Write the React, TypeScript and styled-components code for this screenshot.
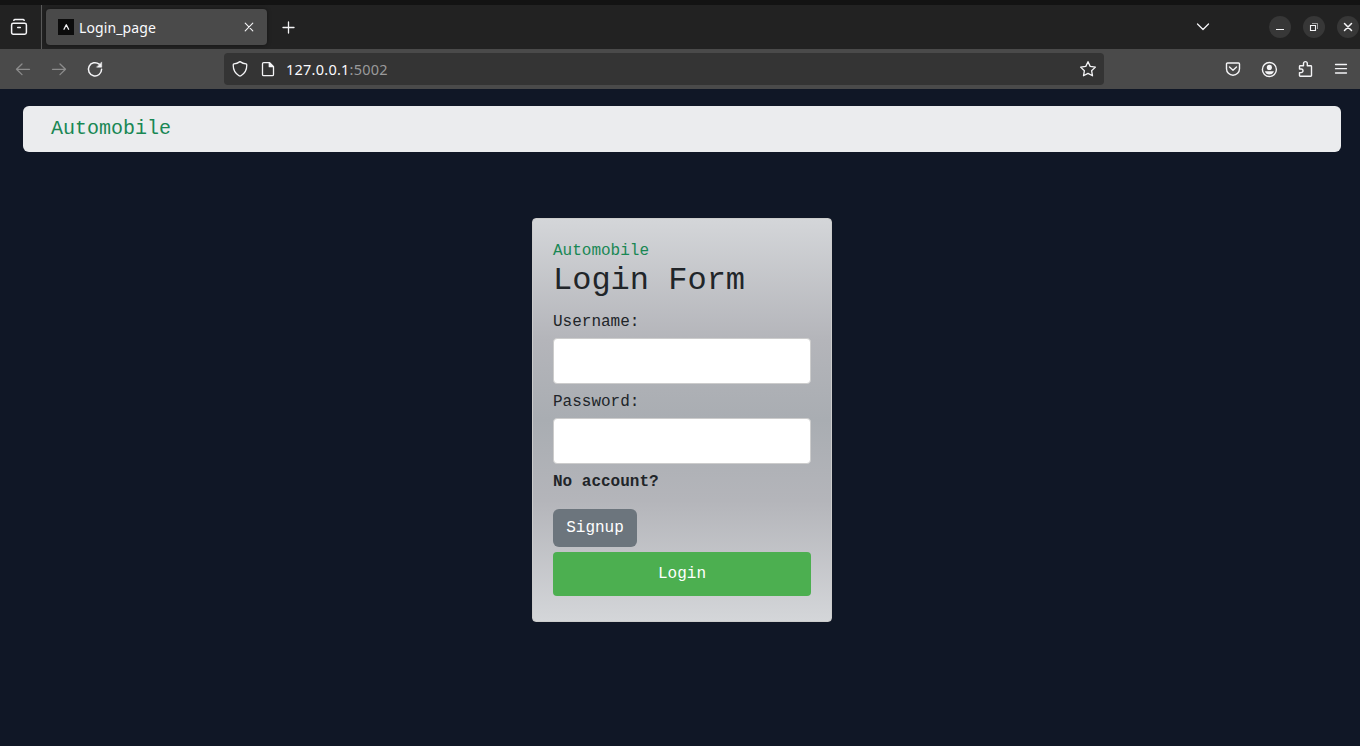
import React from "react";
import styled, { createGlobalStyle } from "styled-components";

const GlobalStyle = createGlobalStyle`
  *, *::before, *::after { box-sizing: border-box; }
  body { margin: 0; background: #101726; overflow: hidden; }
`;

const Window = styled.div`
  height: 746px;
  display: flex;
  flex-direction: column;
  background: #101726;
  font-family: "Noto Sans", "Open Sans", sans-serif;
  color: #fbfbfe;
`;
const DesktopEdge = styled.div`
  height: 5px;
  background: #131313;
`;
const TabBar = styled.div`
  height: 44px;
  display: flex;
  align-items: center;
  background: #222222;
`;
const RecentButton = styled.div`
  width: 42px;
  height: 44px;
  padding-left: 9px;
  display: flex;
  align-items: center;
  border-right: 1px solid #5a5a5a;
`;
const Tab = styled.div`
  width: 221px;
  height: 36px;
  margin-left: 4px;
  padding: 0 8px 0 12px;
  display: flex;
  align-items: center;
  border-radius: 4px;
  background: #4a4a4a;
  box-shadow: 0 0 4px rgba(0, 0, 0, 0.4);
`;
const Favicon = styled.div`
  width: 16px;
  height: 16px;
  background: #0c0c0c;
  display: flex;
`;
const TabTitle = styled.span`
  flex: 1;
  margin-left: 5px;
  padding-top: 2px;
  font-size: 14px;
  line-height: 20px;
  letter-spacing: 0.12px;
`;
const NewTab = styled.div`
  width: 20px;
  height: 20px;
  margin-left: 12px;
`;
const WindowControls = styled.div`
  margin-left: auto;
  display: flex;
  align-items: center;
  gap: 12px;
  margin-right: 1px;
`;
const ListTabs = styled.div`
  width: 20px;
  height: 20px;
  margin-right: 44px;
`;
const ControlButton = styled.div`
  width: 22px;
  height: 22px;
  padding: 1px;
  border-radius: 50%;
  background: #373737;
`;
const NavBar = styled.div`
  height: 40px;
  display: flex;
  align-items: center;
  background: #4a4a4a;
`;
const NavGroup = styled.div`
  width: 224px;
  padding-left: 13px;
  display: flex;
  gap: 16px;
`;
const UrlBar = styled.div`
  width: 880px;
  height: 32px;
  padding: 0 6px;
  display: flex;
  align-items: center;
  border-radius: 4px;
  background: #343434;
`;
const UrlIcons = styled.div`
  display: flex;
  gap: 8px;
`;
const Url = styled.span`
  flex: 1;
  margin-left: 8px;
  font-size: 14.5px;
  line-height: 20px;
  letter-spacing: 0.24px;
`;
const Port = styled.span`
  color: #9a9a9b;
`;
const Actions = styled.div`
  margin-left: auto;
  padding-right: 9px;
  display: flex;
  gap: 16px;
`;
const Icon = styled.svg<{ $dim?: boolean; $size?: number }>`
  display: block;
  flex: none;
  width: ${(p) => p.$size ?? 20}px;
  height: ${(p) => p.$size ?? 20}px;
  fill: none;
  stroke: ${(p) => (p.$dim ? "#8c8c8c" : "#f4f4f6")};
  stroke-width: 1.3;
  stroke-linecap: round;
  stroke-linejoin: round;
`;

const Page = styled.main`
  flex: 1;
  padding: 17px 19px 0 23px;
  font-family: "Liberation Mono", monospace;
  font-size: 16px;
  line-height: 24px;
  color: #212529;
`;
const Header = styled.header`
  height: 46px;
  padding: 8px 28px;
  border-radius: 6px;
  background: #ebecee;
  color: #198754;
  font-size: 20px;
  line-height: 30px;
`;
const Card = styled.form`
  width: 300px;
  height: 404px;
  margin: 66px auto 0;
  padding: 20px;
  display: flex;
  flex-direction: column;
  border: 1px solid #cccccc;
  border-radius: 4px;
  background: linear-gradient(#d4d6d9 0%, #b4b5ba 30%, #a9adb2 50%, #b4b5ba 70%, #d4d6d9 100%);
`;
const Brand = styled.div`
  color: #198754;
`;
const Title = styled.h2`
  margin: 0 0 11px;
  font-size: 32px;
  font-weight: 500;
  line-height: 36px;
`;
const Field = styled.label`
  display: flex;
  flex-direction: column;
  gap: 4px;
  margin-bottom: 6px;
`;
const Input = styled.input`
  height: 46px;
  padding: 10px;
  border: 1px solid #cccccc;
  border-radius: 4px;
  background: #ffffff;
`;
const Prompt = styled.p`
  margin: 0 0 15px;
  font-weight: 700;
`;
const Button = styled.button<{ $primary?: boolean }>`
  align-self: ${(p) => (p.$primary ? "stretch" : "flex-start")};
  width: ${(p) => (p.$primary ? "auto" : "84px")};
  height: ${(p) => (p.$primary ? "44px" : "38px")};
  margin-top: ${(p) => (p.$primary ? "5px" : "0")};
  padding: 0;
  border: 0;
  border-radius: ${(p) => (p.$primary ? "4px" : "6px")};
  background: ${(p) => (p.$primary ? "#4caf50" : "#6c757d")};
  color: #ffffff;
  font: inherit;
`;

export default function App() {
  return (
    <Window>
      <GlobalStyle />
      <DesktopEdge />
      <TabBar>
        <RecentButton>
          <Icon viewBox="0 0 20 20">
            <path
              strokeWidth="1.5"
              d="M4.8 3.300Q5.200 2.600 6 2.600h8q.8 0 1.200.7M4.300 6.300h11.400q1.700 0 1.700 1.700v7.500q0 1.700-1.700 1.700H4.300q-1.700 0-1.700-1.700V8q0-1.700 1.700-1.700zM8.700 10.600h2.600"
            />
          </Icon>
        </RecentButton>
        <Tab>
          <Favicon>
            <Icon $size={16} viewBox="0 0 16 16">
              <path d="M6 10.200L8.300 5.800l2.300 4.400" strokeWidth="1.300" />
            </Icon>
          </Favicon>
          <TabTitle>Login_page</TabTitle>
          <Icon viewBox="0 0 20 20">
            <path d="M6.200 6.200l7.600 7.600M13.800 6.200l-7.600 7.600" strokeWidth="1.100" />
          </Icon>
        </Tab>
        <NewTab>
          <Icon viewBox="0 0 20 20">
            <path d="M9.500 5v11M4 10.500h11" />
          </Icon>
        </NewTab>
        <WindowControls>
          <ListTabs>
            <Icon viewBox="0 0 20 20">
              <path d="M4.500 7l5.500 5.500L15.500 7" strokeWidth="1.300" />
            </Icon>
          </ListTabs>
          <ControlButton>
            <Icon viewBox="0 0 20 20">
              <path d="M6 12.500h8" strokeWidth="1" strokeLinecap="butt" />
            </Icon>
          </ControlButton>
          <ControlButton>
            <Icon viewBox="0 0 20 20">
              <path d="M6.500 8.500h5v5h-5z" strokeWidth="1.100" strokeLinejoin="miter" />
              <path d="M8 6.500h5.500v5.500" strokeWidth="1" opacity=".55" strokeLinejoin="miter" strokeLinecap="butt" />
            </Icon>
          </ControlButton>
          <ControlButton>
            <Icon viewBox="0 0 20 20">
              <path d="M6.500 6.500l7 7M13.500 6.500l-7 7" strokeWidth="1.500" />
            </Icon>
          </ControlButton>
        </WindowControls>
      </TabBar>
      <NavBar>
        <NavGroup>
          <Icon $dim viewBox="0 0 20 20">
            <path d="M16.500 10.300H3.500M9 5L3.500 10.300L9 15.600" />
          </Icon>
          <Icon $dim viewBox="0 0 20 20">
            <path d="M3.500 10.300h13M11 5l5.500 5.300l-5.500 5.300" />
          </Icon>
          <Icon viewBox="0 0 20 20">
            <path d="M16.600 10.300a6.600 6.600 0 1 1-2.400-5.100" strokeWidth="1.500" />
            <path d="M16.700 3.300v4.900h-4.900z" fill="#f4f4f6" strokeWidth=".5" />
          </Icon>
        </NavGroup>
        <UrlBar>
          <UrlIcons>
            <Icon viewBox="0 0 20 20">
              <path d="M10 2.600q3 2 6 2.300q.8.200.8 1.200c0 5-1.800 8.300-5.800 10.600q-1 .6-2 0C5 14.400 3.200 11.100 3.200 6.100q0-1 .8-1.200q3-.3 6-2.300z" />
            </Icon>
            <Icon viewBox="0 0 20 20">
              <path d="M5.700 3.600h5.800l4 4v7.800q0 1.200-1.200 1.200H5.700q-1.200 0-1.200-1.200V4.800q0-1.200 1.200-1.200z" />
              <path d="M11.300 3.700v4h4z" fill="#f4f4f6" />
            </Icon>
          </UrlIcons>
          <Url>127.0.0.1<Port>:5002</Port></Url>
          <Icon viewBox="0 0 20 20">
            <path d="M10 2.700l2.200 4.700l5.200.7l-3.800 3.600l.9 5.100L10 14.400l-4.500 2.400l.9-5.100L2.600 8.100l5.200-.7z" />
          </Icon>
        </UrlBar>
        <Actions>
          <Icon viewBox="0 0 20 20">
            <path d="M4.500 4h11q1 0 1 1v4.700a6.500 6.500 0 0 1-13 0V5q0-1 1-1zM6.500 8l3.500 3.300L13.500 8" strokeWidth="1.400" />
          </Icon>
          <Icon viewBox="0 0 20 20">
            <circle cx="10.400" cy="10.500" r="7" strokeWidth="1.400" />
            <circle cx="10.400" cy="8.400" r="2.600" fill="#f4f4f6" stroke="none" />
            <path d="M5.900 12.200h9q-1 3.300-4.500 3.300t-4.500-3.300z" fill="#f4f4f6" stroke="none" />
          </Icon>
          <Icon viewBox="0 0 20 20">
            <path d="M4.500 10V7.500q0-.7.700-.7h3.300V4.500a1.900 1.900 0 0 1 3.800 0v2.300h3.500q.7 0 .7.700v9q0 .7-.7.700H5.200q-.7 0-.7-.7v-2.900h1.700a1.800 1.800 0 0 0 0-3.600z" strokeWidth="1.400" />
          </Icon>
          <Icon viewBox="0 0 20 20">
            <path d="M4.500 5.500h11M4.500 9.700h11M4.500 14h11" />
          </Icon>
        </Actions>
      </NavBar>
      <Page>
        <Header>Automobile</Header>
        <Card>
          <Brand>Automobile</Brand>
          <Title>Login Form</Title>
          <Field>
            Username:
            <Input type="text" />
          </Field>
          <Field>
            Password:
            <Input type="password" />
          </Field>
          <Prompt>No account?</Prompt>
          <Button type="button">Signup</Button>
          <Button type="button" $primary>Login</Button>
        </Card>
      </Page>
    </Window>
  );
}
